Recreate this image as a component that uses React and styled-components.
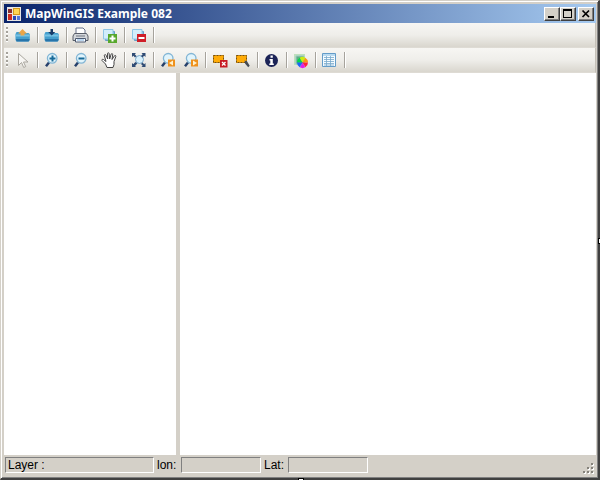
import React from "react";
import styled, { createGlobalStyle } from "styled-components";

const GlobalStyle = createGlobalStyle`
  * { box-sizing: border-box; }
  html { overflow: hidden; }
  body { margin: 0; background: #d4d0c8; }
`;

const Window = styled.div`
  position: relative;
  display: flex;
  flex-direction: column;
  height: 100vh;
  padding: 2px 2px 1px 3px;
  background: #d4d0c8;
  border: 1px solid #d4d0c8;
  border-right: 2px solid #404040;
  border-bottom: 2px solid #404040;
  box-shadow: inset 1px 1px 0 #fff, inset -1px -1px 0 #808080;
  font: 12px/16px "Liberation Sans", "Noto Sans CJK JP", sans-serif;
  color: #000;
`;

const TitleBar = styled.header`
  display: flex;
  flex: none;
  align-items: center;
  height: 19px;
  margin-top: 1px;
  padding: 0 2px 0 3px;
  gap: 4px;
  background: linear-gradient(90deg, #0a246a, #a6caf0);
  color: #fff;
`;

const Title = styled.h1`
  flex: 1;
  margin: 0;
  font: bold 12px/18px "Noto Sans", "Noto Sans CJK JP", sans-serif;
  white-space: nowrap;
`;

const Caption = styled.div`
  display: flex;
`;

const CaptionButton = styled.button`
  display: flex;
  width: 16px;
  height: 14px;
  padding: 0;
  margin-left: ${(p) => (p.$apart ? "2px" : "0")};
  align-items: center;
  justify-content: center;
  background: #d4d0c8;
  border: 1px solid;
  border-color: #fff #404040 #404040 #fff;
  box-shadow: inset -1px -1px 0 #808080;
`;

const ToolBar = styled.div`
  display: flex;
  flex: none;
  align-items: center;
  height: 25px;
  padding-left: 2px;
  background: linear-gradient(#f7f6f3, #efeeea 50%, #d9d6ce);
  border-right: 1px solid #c4c0b8;
  border-bottom: 1px solid #dedbd4;
`;

const Grip = styled.span`
  width: 2px;
  height: 16px;
  margin-right: 3px;
  background: repeating-linear-gradient(#a5a29b 0 2px, #fff 2px 3px, transparent 3px 4px);
`;

const ToolButton = styled.button`
  display: flex;
  width: 23px;
  height: 22px;
  padding: 0;
  align-items: center;
  justify-content: center;
  background: none;
  border: 0;
`;

const Separator = styled.span`
  width: 2px;
  height: 16px;
  margin: 0 1px 0 3px;
  border-left: 1px solid #a6a39c;
  border-right: 1px solid #fff;
`;

const Workspace = styled.main`
  display: grid;
  flex: 1;
  grid-template-columns: 172px 4px 1fr;
  min-height: 0;
`;

const Pane = styled.section`
  background: #fff;
`;

const Splitter = styled.div`
  background: #d4d0c8;
  cursor: col-resize;
`;

const StatusBar = styled.footer`
  display: flex;
  flex: none;
  height: 22px;
  padding: 2px 2px 3px 1px;
  gap: 3px;
`;

const StatusPanel = styled.output`
  width: ${(p) => (p.$wide ? "149px" : "80px")};
  height: 16px;
  padding-left: 2px;
  border: 1px solid;
  border-color: #808080 #fff #fff #808080;
  line-height: 14px;
`;

const StatusLabel = styled.label`
  width: 21px;
  line-height: 16px;
`;

const SizeGrip = styled.svg`
  width: 12px;
  height: 12px;
  margin: 5px 0 0 auto;
`;

const Handle = styled.span`
  position: absolute;
  width: 6px;
  height: 6px;
  background: #fff;
  border: 1px solid #000;
  ${(p) => (p.$side === "right" ? "right: -6px; top: calc(50% - 2px);" : "bottom: -6px; left: calc(50% - 2px);")}
`;

const Svg = ({ children }) => (
  <svg width="17" height="17" viewBox="0 0 17 17" aria-hidden="true">{children}</svg>
);

const Folder = () => (
  <>
    <path d="M1.500 7 2.500 5h5l1 1h6l1.300 1v6l-1 1.500H2.500L1.500 13z" fill="#459fcd" />
    <path d="M1.500 7.500h14v2h-14z" fill="#78c2e4" />
    <path d="M2 12h13.500v1l-1 1.500h-12z" fill="#2875ab" />
  </>
);

const OpenIcon = () => (
  <Svg>
    <Folder />
    <path d="M4 6.500 8.500 2 13 6.500H10.500V8.500H6.500V6.500z" fill="#eba548" />
  </Svg>
);

const SaveIcon = () => (
  <Svg>
    <Folder />
    <path d="M7.500 2h2.500v3h2.300L8.700 8.500 5.200 5h2.300z" fill="#173a68" />
  </Svg>
);

const PrintIcon = () => (
  <Svg>
    <path d="M4 7V1h7l2 2v4" fill="#fff" stroke="#66718a" />
    <path d="M2.500 6.500h12L16 9v4.500H1V9z" fill="#d4d7db" stroke="#5a5f69" />
    <path d="M4 8h9v2H4z" fill="#a1a6ae" />
    <path d="M3.500 11.500h10v3.500h-10z" fill="#fff" stroke="#4d5b73" />
    <path d="M5 13h7" stroke="#79aee0" />
  </Svg>
);

const Layers = () => (
  <>
    <path d="M4.500 4.500h9v9h-9z" fill="#83bce0" stroke="#679fc6" />
    <path d="M2.500 2.500h9.500v9.500H2.500z" fill="#d2edfb" stroke="#8fc6e6" />
  </>
);

const AddIcon = () => (
  <Svg>
    <Layers />
    <path d="M7 7h9v9H7z" fill="#58a82c" />
    <path d="M8.500 11.500h6M11.500 8.500v6" stroke="#fff" strokeWidth="2" />
  </Svg>
);

const RemoveIcon = () => (
  <Svg>
    <Layers />
    <path d="M7 7h9v8H7z" fill="#cf1e28" />
    <path d="M8.500 11h6" stroke="#fff" strokeWidth="2" />
  </Svg>
);

const CursorIcon = () => (
  <Svg>
    <path d="M4.500 1.500v12l3-3 2.200 5 2-.9-2.200-4.600H14z" fill="#f7f6f3" stroke="#aaa79f" />
  </Svg>
);

const Lens = ({ badge }) => (
  <>
    <path d="M3 14.200 6 10.500" stroke="#26406b" strokeWidth="2.500" />
    <circle cx="9.200" cy="6.300" r="4.800" fill="#e0f4fc" stroke="#83b6d5" strokeWidth="1.300" />
    {badge}
  </>
);

const ZoomInIcon = () => (
  <Svg><Lens badge={<path d="M6.500 6.500h6M9.500 3.500v6" stroke="#176a99" strokeWidth="2" />} /></Svg>
);

const ZoomOutIcon = () => (
  <Svg><Lens badge={<path d="M6.500 6.500h6" stroke="#176a99" strokeWidth="2" />} /></Svg>
);

const HandIcon = () => (
  <Svg>
    <path
      d="M6 15.500 4.500 12 1 8.500c-.5-1 .7-1.500 1.500-1L5 9.500 3.300 3.500c0-1 1.300-1.300 1.700-.3L6.700 7 6.500 1.500c.2-1 1.400-1 1.600 0L8.700 7l1.500-5c.4-.8 1.600-.5 1.500.5L11 7.500l2.500-3.800c.7-.7 1.700 0 1.300.9L13 9.500v3l-1 3z"
      fill="#fff"
      stroke="#444"
    />
  </Svg>
);

const ExtentIcon = () => (
  <Svg>
    <path d="M4 13.500 7 10" stroke="#314c73" strokeWidth="2" />
    <circle cx="9.500" cy="7.500" r="4" fill="#d8f0fb" stroke="#79a9cb" />
    <path d="M2 1h4L4.800 2.300 6.500 4 5 5.500 3.300 3.800 2 5zM15.500 1v4l-1.300-1.200L12.500 5.500 11 4l1.700-1.700L11.500 1zM15.500 15h-4l1.200-1.300L11 12l1.500-1.500 1.700 1.700 1.300-1.200zM2 15v-4l1.300 1.200L5 10.500 6.500 12l-1.700 1.700L6 15z" fill="#304c75" />
  </Svg>
);

const ZoomStepIcon = ({ back }) => (
  <Svg>
    <Lens
      badge={
        <>
          <path d="M9 7.500h7v7H9z" fill="#ef911d" />
          <path d={back ? "M14 8.500v5L10 11z" : "M11 8.500v5l4-2.500z"} fill="#fff2cf" />
        </>
      }
    />
  </Svg>
);

const Selection = () => (
  <>
    <path d="M2 3h11v8H2z" fill="#ffac08" />
    <path d="M2.500 3.500h10v7h-10z" fill="none" stroke="#71501a" strokeDasharray="2 1" />
  </>
);

const ClearIcon = () => (
  <Svg>
    <Selection />
    <path d="M9 8h7.500v7.500H9z" fill="#c71a24" />
    <path d="m11 10 3.500 3.500m0-3.500L11 13.500" stroke="#fff" strokeWidth="1.300" />
  </Svg>
);

const SelectIcon = () => (
  <Svg>
    <Selection />
    <path d="M10.500 8.500 13 9.300l2.700 4.500-1.500 1.500-3-3.500z" fill="#454b55" />
  </Svg>
);

const InfoIcon = () => (
  <Svg>
    <circle cx="8.500" cy="8.500" r="6.500" fill="#1c2457" />
    <path d="M7.500 3.500h2.300v2.200H7.500zM6.500 7h3.300v4.500h1v1.500H6.300v-1.500h1V8.500h-.8z" fill="#fff" />
  </Svg>
);

const ColorsIcon = () => (
  <Svg>
    <path d="M2 2h11v11H2z" fill="#bfe0bd" />
    <path d="M4 4h8v8H4z" fill="#60ad83" stroke="#9bcac6" />
    <path d="M10.500 10.500H5A5.500 5.500 0 0 1 7.700 5.700z" fill="#00d84d" />
    <path d="M10.500 10.500 7.700 5.700A5.500 5.500 0 0 1 13.300 5.700z" fill="#caed12" />
    <path d="M10.500 10.500 13.300 5.700A5.500 5.500 0 0 1 16 10.500z" fill="#ff9711" />
    <path d="M10.500 10.500H16a5.500 5.500 0 0 1-2.700 4.800z" fill="#ff2041" />
    <path d="m10.500 10.500 2.800 4.800a5.500 5.500 0 0 1-5.600 0z" fill="#df21e6" />
    <path d="m10.500 10.500-2.800 4.800A5.500 5.500 0 0 1 5 10.500z" fill="#1b66f4" />
  </Svg>
);

const TableIcon = () => (
  <Svg>
    <path d="M1.500 1.500h13v13h-13z" fill="#f4fbff" stroke="#649cc8" />
    <path d="M2 2h12v2H2z" fill="#b9daf0" />
    <path d="M3 5.500h10M3 7.500h10M3 9.500h10M3 11.500h10M3 13h10M5.500 4v10M9.500 4v10" stroke="#79a9cb" strokeWidth="0.800" />
  </Svg>
);

const FILE_TOOLS = [
  [["Open", OpenIcon]],
  [["Save", SaveIcon]],
  [["Print", PrintIcon]],
  [["Add layer", AddIcon]],
  [["Remove layer", RemoveIcon]],
];

const PreviousIcon = () => <ZoomStepIcon back />;

const MAP_TOOLS = [
  [["Pointer", CursorIcon]],
  [["Zoom in", ZoomInIcon]],
  [["Zoom out", ZoomOutIcon]],
  [["Pan", HandIcon]],
  [["Full extent", ExtentIcon]],
  [["Previous extent", PreviousIcon], ["Next extent", ZoomStepIcon]],
  [["Clear selection", ClearIcon], ["Select", SelectIcon]],
  [["Identify", InfoIcon]],
  [["Symbology", ColorsIcon]],
  [["Attribute table", TableIcon]],
];

const Tools = ({ label, groups }) => (
  <ToolBar role="toolbar" aria-label={label}>
    <Grip />
    {groups.map((group) => (
      <React.Fragment key={group[0][0]}>
        {group.map(([name, Icon]) => (
          <ToolButton key={name} type="button" aria-label={name}><Icon /></ToolButton>
        ))}
        <Separator />
      </React.Fragment>
    ))}
  </ToolBar>
);

const GRIP_DOTS = [[9, 1], [5, 5], [9, 5], [1, 9], [5, 9], [9, 9]];

export default function App() {
  return (
    <>
      <GlobalStyle />
      <Window>
        <TitleBar>
          <svg width="14" height="14" viewBox="0 0 14 14" aria-hidden="true">
            <path d="M0 0h14v14H0z" fill="#e6e5e3" />
            <path d="M1 2h4v4H1z" fill="#8b3030" />
            <path d="M6 1h7v7H6z" fill="#d59a1e" />
            <path d="M7 2h5v5H7z" fill="#ffd754" />
            <path d="M1 7h4v6H1z" fill="#cf2d20" />
            <path d="M6 9h3v4H6z" fill="#2948b4" />
            <path d="M10 9h3v4h-3z" fill="#5279dc" />
          </svg>
          <Title>MapWinGIS Example 082</Title>
          <Caption>
            <CaptionButton type="button" aria-label="Minimize">
              <svg width="12" height="10"><path d="M2 7h6v2H2z" /></svg>
            </CaptionButton>
            <CaptionButton type="button" aria-label="Maximize">
              <svg width="12" height="10"><path d="M1 0h9v9H1zM2 2v6h7V2z" fillRule="evenodd" /></svg>
            </CaptionButton>
            <CaptionButton type="button" aria-label="Close" $apart>
              <svg width="12" height="10"><path d="m2.500 1.500 6.500 6.500m0-6.500L2.500 8" stroke="#000" strokeWidth="1.700" /></svg>
            </CaptionButton>
          </Caption>
        </TitleBar>
        <Tools label="File" groups={FILE_TOOLS} />
        <Tools label="Map" groups={MAP_TOOLS} />
        <Workspace>
          <Pane aria-label="Layers" />
          <Splitter />
          <Pane aria-label="Map" />
        </Workspace>
        <StatusBar>
          <StatusPanel $wide>Layer :</StatusPanel>
          <StatusLabel htmlFor="lon">lon:</StatusLabel>
          <StatusPanel id="lon" />
          <StatusLabel htmlFor="lat">Lat:</StatusLabel>
          <StatusPanel id="lat" />
          <SizeGrip viewBox="0 0 12 12">
            {GRIP_DOTS.map(([x, y]) => (
              <g key={`${x}-${y}`}>
                <rect x={x + 1} y={y + 1} width="2" height="2" fill="#fff" />
                <rect x={x} y={y} width="2" height="2" fill="#85827b" />
              </g>
            ))}
          </SizeGrip>
        </StatusBar>
        <Handle $side="right" />
        <Handle $side="bottom" />
      </Window>
    </>
  );
}
